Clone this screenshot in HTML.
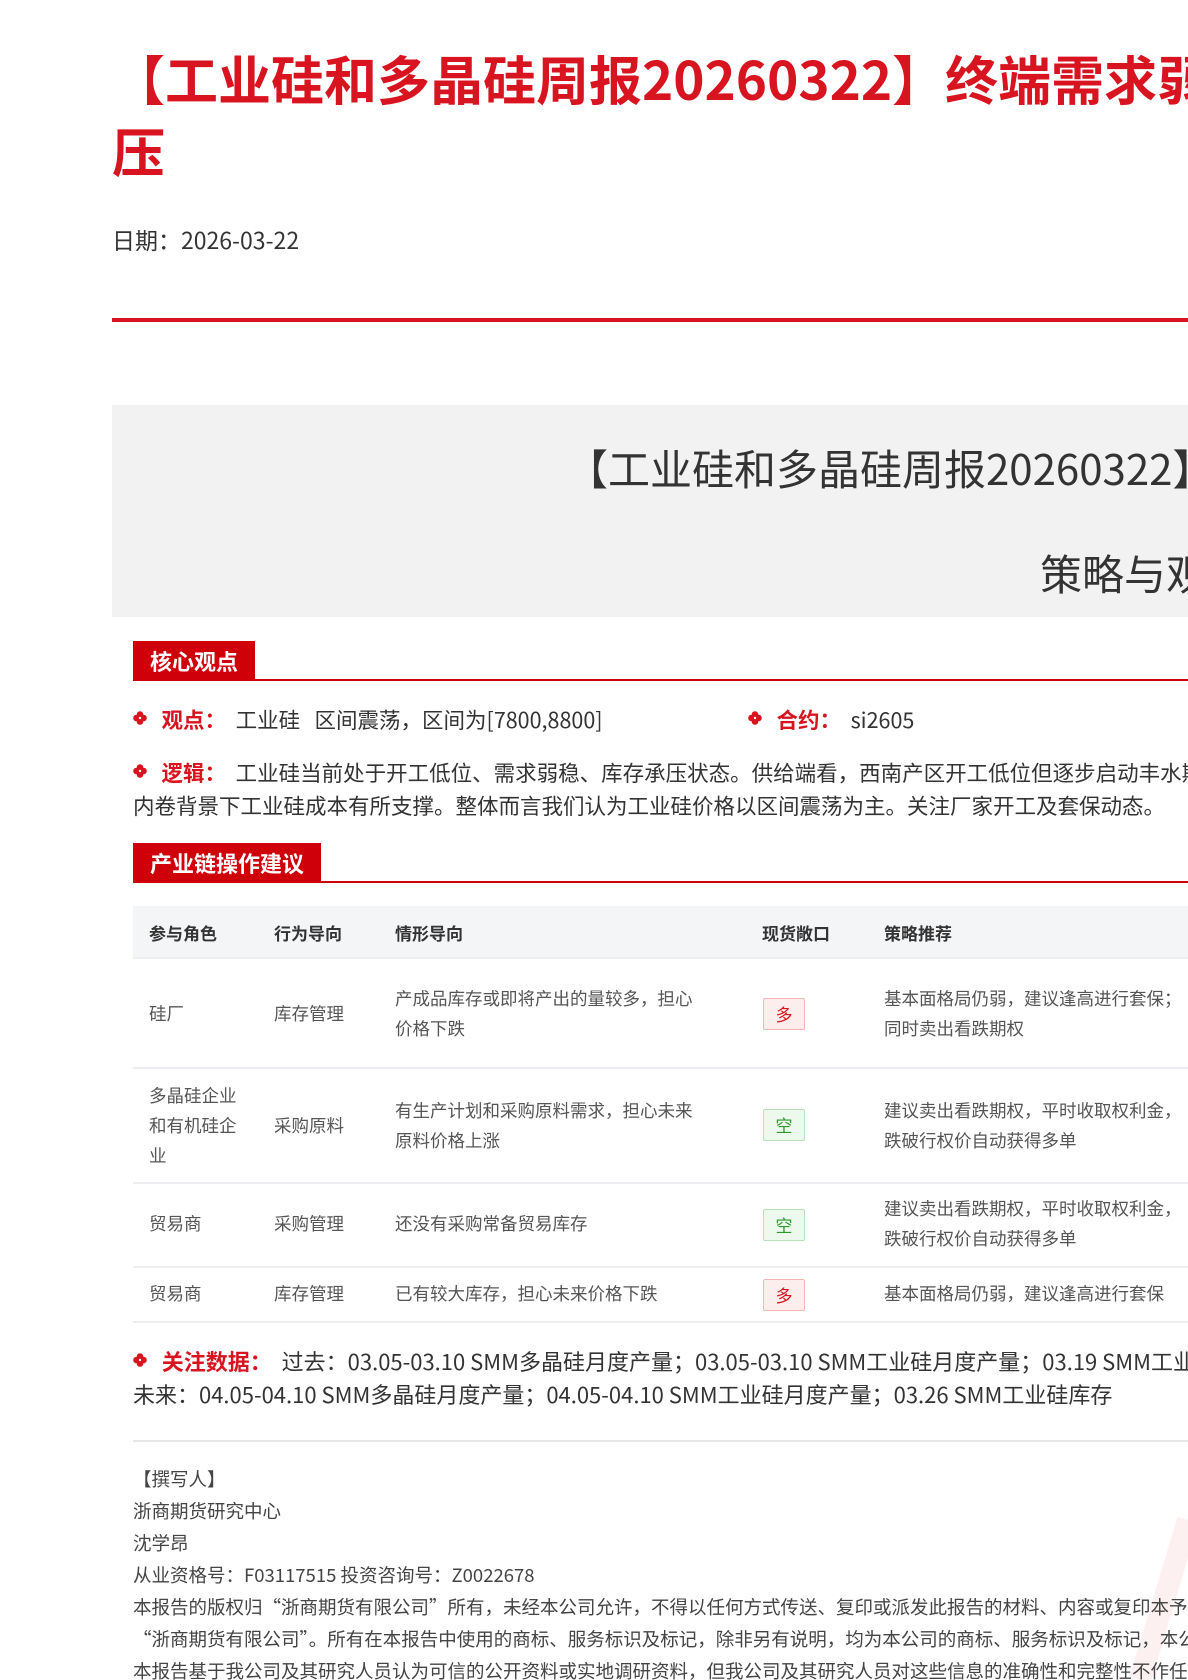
<!DOCTYPE html>
<html><head><meta charset="utf-8"><style>
html,body{margin:0;padding:0;width:1188px;height:1680px;overflow:hidden;background:#fff;}
body{position:relative;font-family:"Noto Sans CJK SC","Liberation Sans",sans-serif;color:#333;}
.a{position:absolute;white-space:nowrap;}
.title{left:112px;font-size:53px;font-weight:bold;color:#d7141f;line-height:72px;}
.red{color:#d7141f;font-weight:bold;}
.b{font-size:21.5px;line-height:32px;color:#333;}
.dia{display:inline-block;width:14px;height:14px;position:relative;top:-3px;}
.sec{background:#d0000b;color:#fff;font-size:22px;font-weight:bold;height:40px;line-height:40px;padding:0 17px;box-sizing:border-box;}
.secl{left:133px;width:1055px;height:2px;background:#d0000b;}
.t{font-size:17.5px;line-height:30px;color:#555;}
.th{font-size:17px;font-weight:bold;color:#333;}
.rowline{left:133px;width:1055px;height:2px;background:#eceef2;}
.tag{width:42px;height:32px;line-height:30px;text-align:center;font-size:17px;box-sizing:border-box;border-radius:2px;}
.duo{border:1px solid #f5b5b5;background:#fdeeee;color:#d7141f;}
.kong{border:1px solid #b7e1b7;background:#eef9ee;color:#2e9a2e;}
.f{font-size:18.5px;line-height:32px;color:#444;left:133px;}
</style></head><body>
<svg class="a" style="left:1100px;top:1500px;" width="88" height="180"><path d="M88 20 L40 180" stroke="#fdf0f0" stroke-width="22" fill="none"/></svg>
<svg width="0" height="0" style="position:absolute"><defs><g id="d"><circle cx="7" cy="3.5" r="3.3" fill="#d7141f"/><circle cx="7" cy="10.5" r="3.3" fill="#d7141f"/><circle cx="3.5" cy="7" r="3.3" fill="#d7141f"/><circle cx="10.5" cy="7" r="3.3" fill="#d7141f"/><circle cx="7" cy="7" r="1.2" fill="#fff"/></g></defs></svg>
<div class="a title" style="top:42px">【工业硅和多晶硅周报20260322】终端需求弱稳，库存承</div>
<div class="a title" style="top:114px">压</div>
<div class="a" style="left:112px;top:222px;font-size:23px;color:#333;">日期：2026-03-22</div>
<div class="a" style="left:112px;top:318px;width:1076px;height:4px;background:#d7141f;"></div>

<div class="a" style="left:112px;top:405px;width:1076px;height:212px;background:#f2f2f2;"></div>
<div class="a" style="left:566px;top:437px;font-size:42px;color:#333;">【工业硅和多晶硅周报20260322】</div>
<div class="a" style="left:1040px;top:542px;font-size:42px;color:#333;">策略与观点</div>

<div class="a sec" style="left:133px;top:641px;">核心观点</div>
<div class="a secl" style="top:679px;"></div>

<div class="a b" style="left:133px;top:704px;"><svg class="dia"><use href="#d"/></svg>&nbsp;&nbsp;&nbsp;<span class="red">观点：</span>&nbsp;&nbsp;工业硅&nbsp;&nbsp;&nbsp;区间震荡，区间为[7800,8800]</div>
<div class="a b" style="left:748px;top:704px;"><svg class="dia"><use href="#d"/></svg>&nbsp;&nbsp;&nbsp;<span class="red">合约：</span>&nbsp;&nbsp;si2605</div>
<div class="a b" style="left:133px;top:757px;"><svg class="dia"><use href="#d"/></svg>&nbsp;&nbsp;&nbsp;<span class="red">逻辑：</span>&nbsp;&nbsp;工业硅当前处于开工低位、需求弱稳、库存承压状态。供给端看，西南产区开工低位但逐步启动丰水期</div>
<div class="a b" style="left:133px;top:790px;">内卷背景下工业硅成本有所支撑。整体而言我们认为工业硅价格以区间震荡为主。关注厂家开工及套保动态。</div>

<div class="a sec" style="left:133px;top:843px;">产业链操作建议</div>
<div class="a secl" style="top:881px;"></div>

<div class="a" style="left:133px;top:906px;width:1055px;height:52px;background:#f4f5f7;"></div>
<div class="a th" style="left:149px;top:920px;">参与角色</div>
<div class="a th" style="left:274px;top:920px;">行为导向</div>
<div class="a th" style="left:395px;top:920px;">情形导向</div>
<div class="a th" style="left:762px;top:920px;">现货敞口</div>
<div class="a th" style="left:884px;top:920px;">策略推荐</div>
<div class="a rowline" style="top:957px;"></div>

<div class="a t" style="left:149px;top:999px;">硅厂</div>
<div class="a t" style="left:274px;top:999px;">库存管理</div>
<div class="a t" style="left:395px;top:984px;">产成品库存或即将产出的量较多，担心<br>价格下跌</div>
<div class="a tag duo" style="left:763px;top:998px;">多</div>
<div class="a t" style="left:884px;top:984px;">基本面格局仍弱，建议逢高进行套保；<br>同时卖出看跌期权</div>
<div class="a rowline" style="top:1067px;"></div>

<div class="a t" style="left:149px;top:1081px;">多晶硅企业<br>和有机硅企<br>业</div>
<div class="a t" style="left:274px;top:1111px;">采购原料</div>
<div class="a t" style="left:395px;top:1096px;">有生产计划和采购原料需求，担心未来<br>原料价格上涨</div>
<div class="a tag kong" style="left:763px;top:1109px;">空</div>
<div class="a t" style="left:884px;top:1096px;">建议卖出看跌期权，平时收取权利金，<br>跌破行权价自动获得多单</div>
<div class="a rowline" style="top:1182px;"></div>

<div class="a t" style="left:149px;top:1209px;">贸易商</div>
<div class="a t" style="left:274px;top:1209px;">采购管理</div>
<div class="a t" style="left:395px;top:1209px;">还没有采购常备贸易库存</div>
<div class="a tag kong" style="left:763px;top:1209px;">空</div>
<div class="a t" style="left:884px;top:1194px;">建议卖出看跌期权，平时收取权利金，<br>跌破行权价自动获得多单</div>
<div class="a rowline" style="top:1266px;"></div>

<div class="a t" style="left:149px;top:1279px;">贸易商</div>
<div class="a t" style="left:274px;top:1279px;">库存管理</div>
<div class="a t" style="left:395px;top:1279px;">已有较大库存，担心未来价格下跌</div>
<div class="a tag duo" style="left:763px;top:1279px;">多</div>
<div class="a t" style="left:884px;top:1279px;">基本面格局仍弱，建议逢高进行套保</div>
<div class="a rowline" style="top:1321px;"></div>

<div class="a b" style="left:133px;top:1345px;font-size:22px;"><svg class="dia"><use href="#d"/></svg>&nbsp;&nbsp;&nbsp;<span class="red">关注数据：</span>&nbsp;&nbsp;过去：03.05-03.10 SMM多晶硅月度产量；03.05-03.10 SMM工业硅月度产量；03.19 SMM工业硅库存</div>
<div class="a b" style="left:133px;top:1378px;font-size:22px;">未来：04.05-04.10 SMM多晶硅月度产量；04.05-04.10 SMM工业硅月度产量；03.26 SMM工业硅库存</div>

<div class="a" style="left:133px;top:1440px;width:1055px;height:2px;background:#e6e6e6;"></div>

<div class="a f" style="top:1463px;">【撰写人】</div>
<div class="a f" style="top:1495px;">浙商期货研究中心</div>
<div class="a f" style="top:1527px;">沈学昂</div>
<div class="a f" style="top:1559px;">从业资格号：F03117515 投资咨询号：Z0022678</div>
<div class="a f" style="top:1591px;">本报告的版权归“浙商期货有限公司”所有，未经本公司允许，不得以任何方式传送、复印或派发此报告的材料、内容或复印本予以任何</div>
<div class="a f" style="top:1623px;">“浙商期货有限公司”。所有在本报告中使用的商标、服务标识及标记，除非另有说明，均为本公司的商标、服务标识及标记，本公司</div>
<div class="a f" style="top:1655px;">本报告基于我公司及其研究人员认为可信的公开资料或实地调研资料，但我公司及其研究人员对这些信息的准确性和完整性不作任何保证</div>
</body></html>
